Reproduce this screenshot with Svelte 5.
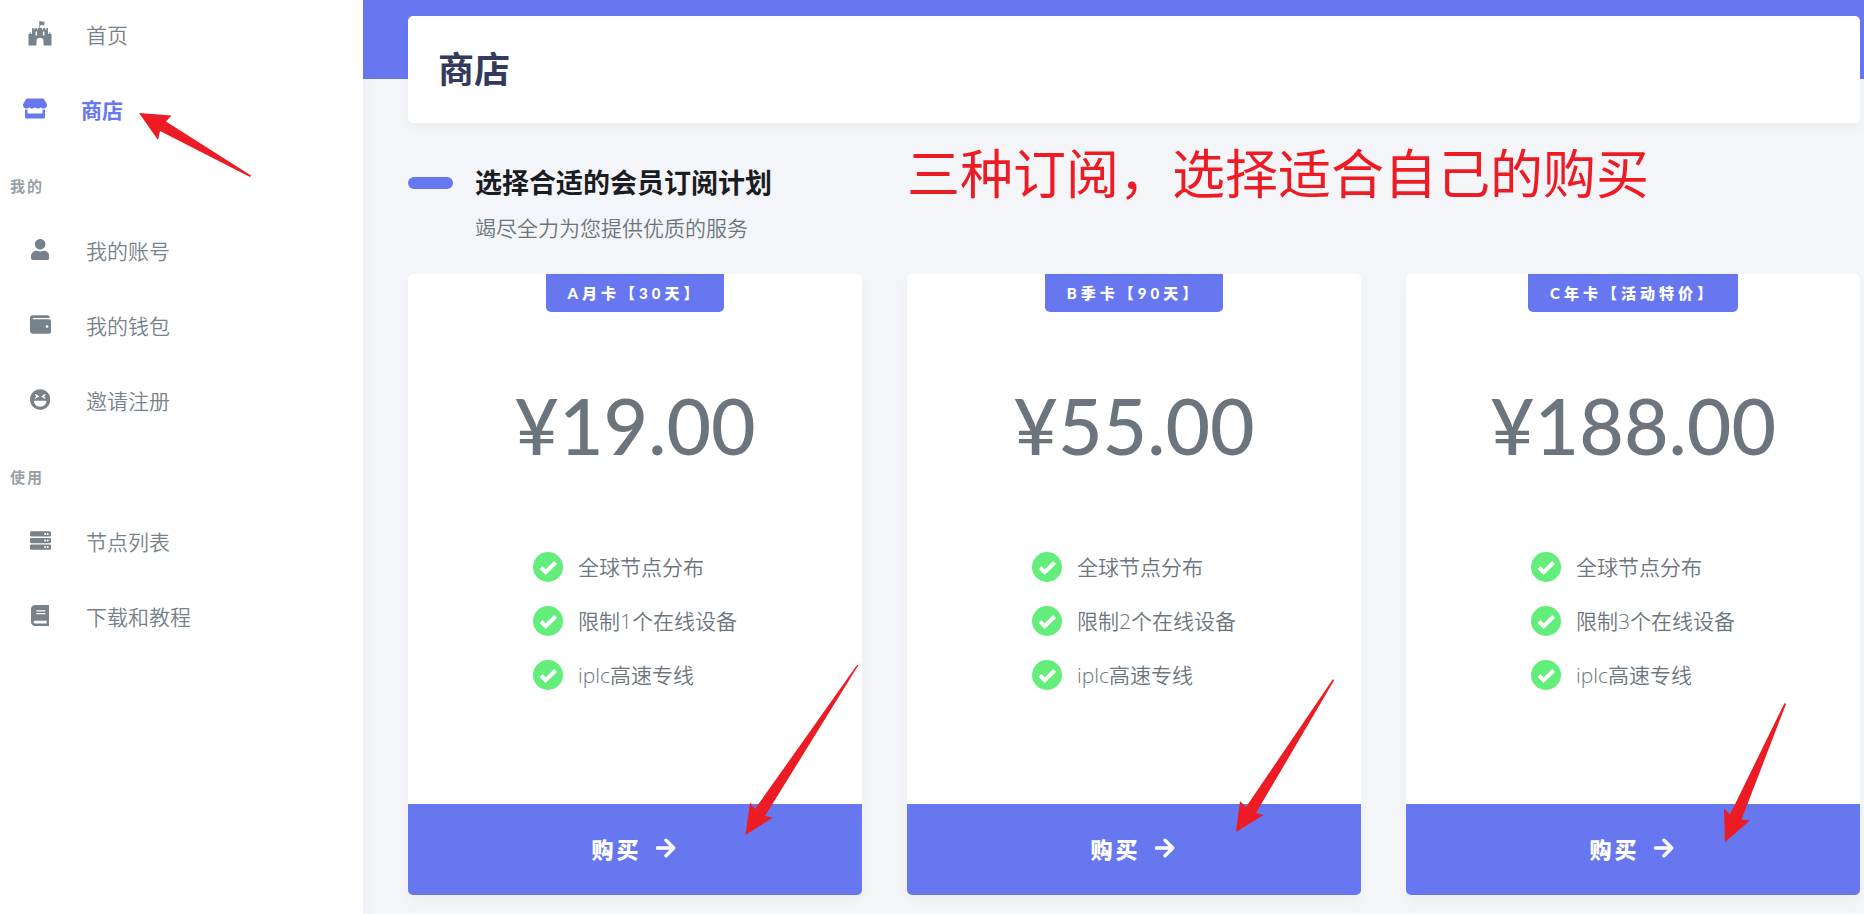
<script>
  const icons = {
    store: {
      box: '0 0 616 512',
      path: 'M602 118.6L537.1 15C531.3 5.7 521 0 510 0H106C95 0 84.7 5.7 78.9 15L14 118.6c-33.5 53.5-3.8 127.9 58.8 136.4 4.5.6 9.1.9 13.7.9 29.6 0 55.8-13 73.8-33.1 18 20.1 44.3 33.1 73.8 33.1 29.6 0 55.8-13 73.8-33.1 18 20.1 44.3 33.1 73.8 33.1 29.6 0 55.8-13 73.8-33.1 18.1 20.1 44.3 33.1 73.8 33.1 4.7 0 9.2-.3 13.7-.9 62.8-8.4 92.6-82.8 59-136.4zM529.5 288c-10 0-19.9-1.5-29.5-3.8V384H116v-99.8c-9.6 2.2-19.5 3.8-29.5 3.8-6 0-12.1-.4-18-1.2-5.6-.8-11.1-2.1-16.4-3.6V480c0 17.7 14.3 32 32 32h448c17.7 0 32-14.3 32-32V283.2c-5.4 1.6-10.8 2.9-16.4 3.6-6.1.8-12.1 1.2-18.2 1.2z'
    },
    castle: {
      box: '0 0 24 25',
      path: 'M11.3 0h.9v.6c1.600-.7 2.400.5 4.200-.2v3.600c-1.800.7-2.600-.5-4.200.2V7H14v1.600h1.200V7h2.100v1.600h1.200V7H20v6h1.200v-1.500h1.200V13h1.100v11.500h-8V20c0-4.400-7-4.400-7 0v4.500h-8V13h1.100v-1.500h1.200V13H4V7h1.500v1.600h1.200V7h2.100v1.600H10V7h1.300zM7.600 10.600v4h1.500v-4zM14.900 10.600v4h1.500v-4z'
    },
    user: {
      box: '0 0 448 512',
      path: 'M224 256c70.7 0 128-57.3 128-128S294.7 0 224 0 96 57.3 96 128s57.3 128 128 128zm89.6 32h-16.7c-22.2 10.2-46.9 16-72.9 16s-50.6-5.8-72.9-16h-16.7C60.2 288 0 348.2 0 422.4V464c0 26.5 21.5 48 48 48h352c26.5 0 48-21.5 48-48v-41.6c0-74.2-60.2-134.4-134.4-134.4z'
    },
    wallet: {
      box: '0 0 512 512',
      path: 'M461.2 128H80c-8.84 0-16-7.16-16-16s7.16-16 16-16h384c8.84 0 16-7.16 16-16 0-26.51-21.49-48-48-48H64C28.65 32 0 60.65 0 96v320c0 35.35 28.65 64 64 64h397.2c28.02 0 50.8-21.53 50.8-48V176c0-26.47-22.78-48-50.8-48zM416 336c-17.67 0-32-14.33-32-32s14.33-32 32-32 32 14.33 32 32-14.33 32-32 32z'
    },
    laugh: {
      box: '0 0 496 512',
      path: 'M248 8C111 8 0 119 0 256s111 248 248 248 248-111 248-248S385 8 248 8zm33.8 161.7l80-48c11.6-6.9 24 7.7 15.4 18L343.6 180l33.6 40.3c8.7 10.4-3.9 24.8-15.4 18l-80-48c-7.7-4.7-7.7-15.9 0-20.6zm-163-30c-8.6-10.3 3.8-24.9 15.4-18l80 48c7.8 4.7 7.8 15.9 0 20.6l-80 48c-11.5 6.8-24-7.6-15.4-18l33.6-40.3-33.6-40.3zM398.9 306C390 377 329.4 432 256 432h-16c-73.4 0-134-55-142.9-126-1.2-9.5 6.3-18 15.9-18h270c9.6 0 17.1 8.4 15.9 18z'
    },
    server: {
      box: '0 0 512 512',
      path: 'M32 32h448a32 32 0 0 1 32 32v64a32 32 0 0 1-32 32H32a32 32 0 0 1-32-32V64a32 32 0 0 1 32-32zM344 96a24 24 0 1 0 48 0a24 24 0 1 0-48 0zM408 96a24 24 0 1 0 48 0a24 24 0 1 0-48 0zM32 192h448a32 32 0 0 1 32 32v64a32 32 0 0 1-32 32H32a32 32 0 0 1-32-32v-64a32 32 0 0 1 32-32zM344 256a24 24 0 1 0 48 0a24 24 0 1 0-48 0zM408 256a24 24 0 1 0 48 0a24 24 0 1 0-48 0zM32 352h448a32 32 0 0 1 32 32v64a32 32 0 0 1-32 32H32a32 32 0 0 1-32-32v-64a32 32 0 0 1 32-32zM344 416a24 24 0 1 0 48 0a24 24 0 1 0-48 0zM408 416a24 24 0 1 0 48 0a24 24 0 1 0-48 0z'
    },
    book: {
      box: '0 0 448 512',
      path: 'M448 360V24c0-13.3-10.7-24-24-24H96C43 0 0 43 0 96v320c0 53 43 96 96 96h328c13.3 0 24-10.7 24-24v-16c0-7.5-3.5-14.3-8.9-18.7-4.2-15.4-4.2-59.3 0-74.7 5.4-4.3 8.9-11.1 8.9-18.6zM128 134c0-3.3 2.7-6 6-6h212c3.3 0 6 2.7 6 6v20c0 3.3-2.7 6-6 6H134c-3.3 0-6-2.7-6-6v-20zm0 64c0-3.3 2.7-6 6-6h212c3.3 0 6 2.7 6 6v20c0 3.3-2.7 6-6 6H134c-3.3 0-6-2.7-6-6v-20zm253.4 250H96c-17.7 0-32-14.3-32-32 0-17.6 14.4-32 32-32h285.4c-1.9 17.1-1.9 46.9 0 64z'
    }
  };

  const menu = [
    {
      items: [
        { label: '首页', icon: 'castle', large: true },
        { label: '商店', icon: 'store', large: true, active: true }
      ]
    },
    {
      title: '我的',
      items: [
        { label: '我的账号', icon: 'user' },
        { label: '我的钱包', icon: 'wallet' },
        { label: '邀请注册', icon: 'laugh' }
      ]
    },
    {
      title: '使用',
      items: [
        { label: '节点列表', icon: 'server' },
        { label: '下载和教程', icon: 'book' }
      ]
    }
  ];

  // arrow: polygon points in the card's own coordinates
  const plans = [
    {
      name: 'A月卡【30天】',
      price: '19.00',
      devices: 1,
      arrow: '337.5,561 342,528.5 347,535 449,391 450.5,391 357,542 365,543.5'
    },
    {
      name: 'B季卡【90天】',
      price: '55.00',
      devices: 2,
      arrow: '329,558 333,527 339,533 426,405 427,406.5 349,539 356.5,541'
    },
    {
      name: 'C年卡【活动特价】',
      price: '188.00',
      devices: 3,
      arrow: '319,568 318,534.5 324,540.5 378.5,429 380,430 335.5,545.5 344,546.5'
    }
  ];
</script>

<div class="layout">
  <aside>
    <nav>
      {#each menu as group}
        {#if group.title}
          <h3>{group.title}</h3>
        {/if}
        <ul>
          {#each group.items as item}
            <li>
              <a href="#{item.icon}" class:active={item.active}>
                <span class="icon">
                  <svg class:large={item.large} viewBox={icons[item.icon].box} aria-hidden="true">
                    <path fill-rule="evenodd" d={icons[item.icon].path} />
                  </svg>
                </span>
                {item.label}
              </a>
            </li>
          {/each}
        </ul>
      {/each}
    </nav>
    <svg class="arrow" aria-hidden="true">
      <polygon points="139,113 171.5,115.5 166,121.5 251,175.5 250,177 160,131 158,140" />
    </svg>
  </aside>

  <main>
    <header>
      <h1>商店</h1>
    </header>

    <section class="intro">
      <h2>选择合适的会员订阅计划</h2>
      <p>竭尽全力为您提供优质的服务</p>
      <strong class="note">三种订阅，选择适合自己的购买</strong>
    </section>

    <div class="plans">
      {#each plans as plan}
        <article>
          <div class="badge">{plan.name}</div>
          <div class="price">¥{plan.price}</div>
          <ul class="features">
            {#each ['全球节点分布', `限制${plan.devices}个在线设备`, 'iplc高速专线'] as feature}
              <li>
                <svg viewBox="0 0 30 30" aria-hidden="true">
                  <circle cx="15" cy="15" r="15" />
                  <path d="M8 15.500l4.700 4.700 9.900-9.700" />
                </svg>
                {feature}
              </li>
            {/each}
          </ul>
          <button type="button">
            <span>购买</span>
            <svg viewBox="0 0 18 18" aria-hidden="true">
              <path d="M1 9h15M9 2l7 7-7 7" />
            </svg>
          </button>
          <svg class="arrow" aria-hidden="true">
            <polygon points={plan.arrow} />
          </svg>
        </article>
      {/each}
    </div>
  </main>
</div>

<style>
  :global(body) {
    background: #f4f5f8;
    color: #6c757d;
    font-family: Lato, "Noto Sans CJK SC", sans-serif;
    font-size: 21px;
    font-weight: 350;
  }

  h1,
  h2,
  h3,
  p,
  ul {
    margin: 0;
    padding: 0;
    list-style: none;
  }

  .layout {
    display: grid;
    grid-template-columns: 363px 1fr;
    min-height: 100vh;
  }

  aside {
    position: relative;
    background: #fff;
    box-shadow: 0 0 12px rgba(103, 119, 239, 0.08);
    clip-path: inset(0 -12px 0 0);
  }

  nav {
    padding-top: 12px;
  }

  nav h3 {
    height: 48px;
    margin-bottom: 18px;
    padding-left: 10px;
    color: #98a0a8;
    font-size: 15px;
    font-weight: 700;
    line-height: 48px;
    letter-spacing: 2px;
  }

  nav a {
    display: flex;
    align-items: center;
    gap: 31px;
    height: 43px;
    margin-bottom: 32px;
    padding-left: 25px;
    color: #78828a;
    text-decoration: none;
  }

  nav a.active {
    padding-left: 20px;
    color: #6777ef;
    font-weight: 700;
  }

  .icon {
    display: flex;
    justify-content: center;
    width: 30px;
  }

  .icon svg {
    height: 21px;
    fill: currentColor;
  }

  .icon .large {
    width: 24px;
    height: 25px;
  }

  main {
    padding: 16px 4px 19px 45px;
    background: linear-gradient(#6777ef 79px, transparent 79px);
  }

  header {
    padding: 27px 30px;
    border-radius: 5px;
    background: #fff;
    box-shadow: 0 6px 12px rgba(0, 0, 0, 0.03);
  }

  h1 {
    color: #34395e;
    font-size: 36px;
    font-weight: 700;
    line-height: 53px;
  }

  .intro {
    position: relative;
    margin: 39px 0 27px;
    padding-left: 67px;
  }

  h2 {
    color: #191d21;
    font-size: 27px;
    font-weight: 700;
    line-height: 42px;
  }

  h2::before {
    content: "";
    position: absolute;
    top: 15px;
    left: 0;
    width: 45px;
    height: 12px;
    border-radius: 6px;
    background: #6777ef;
  }

  .intro p {
    padding-top: 4px;
    line-height: 39px;
  }

  .note {
    position: absolute;
    top: -20px;
    left: 499px;
    color: #ed1c24;
    font-size: 53px;
    font-weight: 400;
    line-height: 64px;
    white-space: nowrap;
  }

  .plans {
    display: grid;
    grid-template-columns: repeat(3, 1fr);
    gap: 45px;
  }

  article {
    position: relative;
    display: flex;
    flex-direction: column;
    align-items: center;
    border-radius: 5px;
    background: #fff;
    box-shadow: 0 6px 12px rgba(0, 0, 0, 0.03);
  }

  .badge {
    padding: 0 22px;
    border-radius: 0 0 5px 5px;
    background: #6777ef;
    color: #fff;
    font-size: 15px;
    font-weight: 900;
    line-height: 38px;
    letter-spacing: 4px;
  }

  .price {
    margin: 68px 0 82px;
    font-size: 77px;
    font-weight: 500;
    line-height: 90px;
  }

  .features {
    display: grid;
    gap: 24px;
    width: 204px;
    margin-bottom: 114px;
    font-family: "Open Sans", "Noto Sans CJK SC", sans-serif;
  }

  .features li {
    display: flex;
    align-items: center;
    gap: 15px;
    line-height: 30px;
    white-space: nowrap;
  }

  .features svg {
    flex: none;
    width: 30px;
    height: 30px;
    fill: #63ed7a;
  }

  .features path {
    fill: none;
    stroke: #fff;
    stroke-width: 4;
  }

  button {
    display: flex;
    align-items: center;
    justify-content: center;
    gap: 14px;
    width: 100%;
    height: 91px;
    padding: 0 3px 3px 0;
    border: 0;
    border-radius: 0 0 5px 5px;
    background: #6777ef;
    color: #fff;
    font: inherit;
    font-size: 22px;
    font-weight: 900;
    letter-spacing: 3px;
    cursor: pointer;
  }

  button svg {
    width: 20px;
    height: 20px;
    fill: none;
    stroke: currentColor;
    stroke-width: 3;
    stroke-linecap: round;
    stroke-linejoin: round;
  }

  .arrow {
    position: absolute;
    top: 0;
    left: 0;
    width: 100%;
    height: 100%;
    fill: #ed1c24;
    pointer-events: none;
  }
</style>
